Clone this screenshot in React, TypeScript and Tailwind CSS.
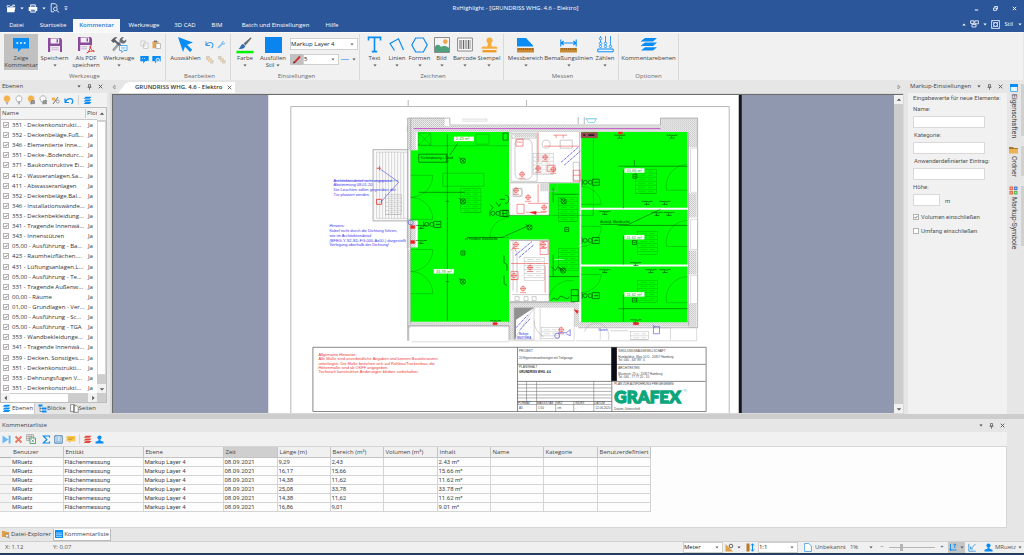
import { Fragment, type ReactNode } from "react";
import clsx from "clsx";

const BLUE = "#0a8cf5";

const LAYERS = [
  "351 - Deckenkonstrukti...",
  "352 - Deckenbeläge.Fuß...",
  "346 - Elementierte Inne...",
  "351 - Decke-,Bodendurc...",
  "371 - Baukonstruktive Ei...",
  "412 - Wasseranlagen.Sa...",
  "411 - Abwasseranlagen",
  "352 - Deckenbeläge.Bal...",
  "346 - Installationswände...",
  "353 - Deckenbekleidung...",
  "341 - Tragende Innenwä...",
  "343 - Innenstützen",
  "05,00 - Ausführung - Ba...",
  "423 - Raumheizflächen....",
  "431 - Lüftungsanlagen.L...",
  "05,00 - Ausführung - Te...",
  "331 - Tragende Außenw...",
  "00,00 - Räume",
  "01,00 - Grundlagen - Ver...",
  "05,00 - Ausführung - Sc...",
  "05,00 - Ausführung - TGA",
  "353 - Wandbekleidunge...",
  "341 - Tragende Innenwä...",
  "359 - Decken, Sonstiges....",
  "351 - Deckenkonstrukti...",
  "353 - Dehnungsfugen V...",
  "351 - Deckenkonstrukti...",
];

const COLUMNS = [
  { label: "Benutzer", width: "w-[52px]" },
  { label: "Entität", width: "w-[80px]" },
  { label: "Ebene", width: "w-[80px]" },
  { label: "Zeit", width: "w-[54px]" },
  { label: "Länge (m)", width: "w-[53px]" },
  { label: "Bereich (m²)", width: "w-[53px]" },
  { label: "Volumen (m³)", width: "w-[54px]" },
  { label: "Inhalt", width: "w-[53px]" },
  { label: "Name", width: "w-[53px]" },
  { label: "Kategorie", width: "w-[54px]" },
  { label: "Benutzerdefiniert", width: "w-[53px]" },
];

const MEASUREMENTS = [
  ["9,29", "2,43", "2.43 m²"],
  ["16,17", "15,66", "15.66 m²"],
  ["14,38", "11,62", "11.62 m²"],
  ["25,08", "33,78", "33.78 m²"],
  ["14,38", "11,62", "11.62 m²"],
  ["16,86", "9,01", "9.01 m²"],
];

/* ---------- small shared pieces ---------- */

function Icon({ w, h, className, children }: { w: number; h: number; className?: string; children: ReactNode }) {
  return (
    <svg width={w} height={h} viewBox={`0 0 ${w} ${h}`} fill="none" aria-hidden className={clsx("shrink-0", className)}>
      {children}
    </svg>
  );
}

function Caret({ className }: { className?: string }) {
  return (
    <Icon w={4} h={3} className={className}>
      <path d="M0.4 0.5h3.2L2 2.4z" fill="currentColor" />
    </Icon>
  );
}

function Arrow({ dir }: { dir: "up" | "down" | "left" | "right" }) {
  const d = {
    up: "M0.8 3.8h4.4L3 1.4z",
    down: "M0.8 2.2h4.4L3 4.6z",
    left: "M3.8 0.8v4.4L1.4 3z",
    right: "M2.2 0.8v4.4L4.6 3z",
  }[dir];
  return (
    <Icon w={6} h={6}>
      <path d={d} fill="#555" />
    </Icon>
  );
}

function TabArrow({ dir }: { dir: "left" | "right" }) {
  return (
    <Icon w={6} h={6}>
      <path d={dir === "left" ? "M4 1v4L1.8 3z" : "M2 1v4l2.200-2z"} stroke="#888" strokeWidth="0.700" />
    </Icon>
  );
}

function Close() {
  return (
    <Icon w={5} h={5}>
      <path d="M0.7 0.7l3.6 3.6M4.3 0.7L0.7 4.3" stroke="#555" strokeWidth="0.9" />
    </Icon>
  );
}

function PanelHeader({ title }: { title: string }) {
  return (
    <header className="flex h-[13px] shrink-0 items-center gap-[6px] bg-[#e6e6e6] pr-[4px] pl-[2px] text-[#444]">
      <h2 className="flex-1 whitespace-nowrap">{title}</h2>
      <button aria-label="Menü"><Caret /></button>
      <button aria-label="Anheften">
        <Icon w={5} h={6}>
          <path d="M1.5 0.5h2v2.6h-2zM0.5 3.3h4M2.5 3.3v2.5" stroke="#555" strokeWidth="0.7" />
        </Icon>
      </button>
      <button aria-label="Schließen"><Close /></button>
    </header>
  );
}

function Check({ id, checked }: { id: string; checked?: boolean }) {
  return (
    <span className="grid size-[6px] shrink-0">
      <input id={id} type="checkbox" defaultChecked={checked} className="peer col-start-1 row-start-1 size-[6px] appearance-none border border-[#b4b4b4] bg-white" />
      <svg viewBox="0 0 6 6" className="pointer-events-none col-start-1 row-start-1 hidden size-[6px] peer-checked:block">
        <path d="M1.5 3l1.1 1.2L4.6 1.8" stroke="#444" strokeWidth="0.7" fill="none" />
      </svg>
    </span>
  );
}

function Combo({ label, value, className }: { label: string; value: string; className: string }) {
  return (
    <span className={clsx("flex items-center border border-[#d0d0d0] bg-white pr-[3px] text-[#222]", className)}>
      <select aria-label={label} className="min-w-0 flex-1 appearance-none bg-transparent">
        <option>{value}</option>
      </select>
      <Caret className="text-[#666]" />
    </span>
  );
}

/* ---------- title bar ---------- */

function TitleBar() {
  return (
    <div className="flex h-[16px] items-center text-white">
      <div className="flex flex-1 items-center gap-[4px] pl-[6px]">
        <button aria-label="Öffnen">
          <Icon w={10} h={9}>
            <path d="M1 3.2h8.4l-1 5H1z" fill="#fff" />
            <path d="M1 3V1.7h2.6l.8.7h2V3M6 1.4h2.4M7.6.4l1.2 1-1.2 1" stroke="#fff" strokeWidth="0.8" />
          </Icon>
        </button>
        <Caret />
        <button aria-label="Drucken">
          <Icon w={10} h={9}>
            <path d="M0.7 3h8.6v4H0.7z" fill="#fff" />
            <path d="M2.6 3V.8h4.8V3M2.6 5.2h4.8v3H2.6z" fill="#5b7fb6" stroke="#fff" strokeWidth="0.8" />
          </Icon>
        </button>
        <Caret />
        <button aria-label="Vorschau">
          <Icon w={10} h={10}>
            <path d="M4 8.8H1.2V.7h4L7 2.4v1.8" stroke="#fff" strokeWidth="0.8" />
            <circle cx="5.4" cy="6" r="1.8" stroke="#fff" strokeWidth="0.8" />
            <path d="M6.8 7.4l2 2" stroke="#fff" strokeWidth="1" />
          </Icon>
        </button>
        <button aria-label="Symbolleiste anpassen">
          <Icon w={4} h={5}>
            <path d="M0.4 .8h3.2" stroke="#fff" strokeWidth="0.8" />
            <path d="M0.4 2.4h3.2L2 4.2z" fill="#fff" />
          </Icon>
        </button>
      </div>
      <h1 className="pl-[8px]">RxHighlight - [GRUNDRISS WHG. 4.6 - Elektro]</h1>
      <div className="flex flex-1 items-center justify-end gap-[14px] pr-[7px]">
        <button aria-label="Minimieren">
          <Icon w={5} h={5}><path d="M0.8 4h3.4" stroke="#fff" /></Icon>
        </button>
        <button aria-label="Verkleinern">
          <Icon w={5} h={5}>
            <path d="M0.5 2h3v2.4h-3zM1.6 1.7V.5h3v2.6H3.8" stroke="#fff" strokeWidth="0.8" />
          </Icon>
        </button>
        <button aria-label="Beenden">
          <Icon w={5} h={5}><path d="M0.8 0.8l3.4 3.4M4.2 0.8L0.8 4.2" stroke="#fff" /></Icon>
        </button>
      </div>
    </div>
  );
}

const TABS = [
  { label: "Datei", width: "w-[33px]" },
  { label: "Startseite", width: "w-[40px]" },
  { label: "Kommentar", width: "w-[47px]", active: true },
  { label: "Werkzeuge", width: "w-[48px]" },
  { label: "3D CAD", width: "w-[34px]" },
  { label: "BIM", width: "w-[30px]" },
  { label: "Batch und Einstellungen", width: "w-[87px]" },
  { label: "Hilfe", width: "w-[26px]" },
];

function RibbonTabs() {
  return (
    <nav className="flex h-[16px] items-end text-white">
      {TABS.map((t) => (
        <button
          key={t.label}
          className={clsx("h-[13px] whitespace-nowrap", t.width, t.active && "bg-[#f8f8f8] font-semibold text-[#2b7fd8]")}
        >
          {t.label}
        </button>
      ))}
      <div className="flex h-[16px] flex-1 items-center justify-end gap-[4px] pr-[2px]">
        <Icon w={4} h={3}><path d="M0.3 2.5h3.4L2 .5z" fill="#fff" /></Icon>
        <button aria-label="Fenster anordnen">
          <Icon w={9} h={8}>
            <path d="M.6.8h3.400v2.600h-3.400zM4.800.8h3.600v3H4.800zM2 4.400h4v2.600H2z" stroke="#fff" strokeWidth="0.8" />
          </Icon>
        </button>
        <Caret />
        <button aria-label="Vollbild">
          <Icon w={9} h={9}>
            <path d="M.5.5h8v8h-8z" stroke="#fff" strokeWidth="0.7" />
            <circle cx="4.5" cy="4.5" r="2" stroke="#fff" strokeWidth="1" />
            <path d="M1.500 1.500l1.600 1.600M7.500 1.500L5.900 3.100M1.500 7.500l1.600-1.600M7.500 7.500L5.900 5.900" stroke="#fff" strokeWidth="0.7" />
          </Icon>
        </button>
        <button className="flex items-center gap-[5px] pl-[1px]">
          Stil <Caret />
        </button>
      </div>
    </nav>
  );
}

/* ---------- ribbon ---------- */

const FloppyShape = (
  <>
    <path d="M1 1h12.6L15 2.4V15H1z" fill="#8a4b9c" />
    <path d="M3.6 1.6h8.6v4.8H3.6zM3.2 9h9.8v6H3.2z" fill="#f4f0f6" />
    <path d="M9.6 2.2h1.4v3.4H9.6z" fill="#8a4b9c" />
    <path d="M4.4 10.8h7.4M4.4 12.8h7.4" stroke="#b59abf" strokeWidth="0.7" />
  </>
);

const RIBBON_ICONS = {
  comment: (
    <Icon w={18} h={16}>
      <path d="M1 1h16v10.5H9.5L6 15v-3.5H1z" fill={BLUE} />
      <path d="M4.4 6h1.8M8.1 6h1.8M11.8 6h1.8" stroke="#fff" strokeWidth="1.3" />
    </Icon>
  ),
  floppy: <Icon w={16} h={16}>{FloppyShape}</Icon>,
  floppyPdf: (
    <Icon w={18} h={18}>
      {FloppyShape}
      <path d="M10 9.500h7v8h-7z" fill="#f1f1f1" />
      <path d="M9.8 17c1.6-.6 3.6-4 3.4-7 .4 3.400 1.600 4.600 4.200 5.200-2.600-.5-5.400.1-7.600 1.800z" stroke="#e03a34" />
    </Icon>
  ),
  tools: (
    <Icon w={18} h={17}>
      <path d="M3 14.600l7-8.200" stroke="#9aa0a6" strokeWidth="2.400" />
      <path d="M5 5l7 6" stroke="#5c6066" strokeWidth="2.200" />
      <path d="M1 4.400L4.600 1.200h3L5 3.400l1.200 1.400L3.400 7z" fill="#5c6066" />
      <path d="M13.800 1l-1.600 2.300 1.700 1.700 2.400-1.400c.4 2.400-1.400 4.400-3.800 3.800L9.600 6.200C9 3.200 11 .6 13.800 1z" fill="#6b7077" />
      <path d="M9.500 9.500h7.500v5h-3.200l-2 2v-2H9.500z" fill="#fff" stroke="#4aa3ee" strokeWidth="0.900" />
      <path d="M11 11.300h4.600M11 12.900h4.600" stroke="#4aa3ee" strokeWidth="0.600" />
    </Icon>
  ),
  cursor: (
    <Icon w={17} h={17}>
      <path d="M1 1l15 5.600-6 2.200 5.200 5-2.200 2.200L8 10.800 6 16z" fill={BLUE} />
    </Icon>
  ),
  brush: (
    <Icon w={18} h={18}>
      <path d="M14.800 1.200L7.600 7.600l1.900 1.900 6.100-7.300z" fill="#6a6f75" />
      <path d="M7 8c-2.200.4-2.200 3.200-4.400 4.800 3 .7 6.400-.4 6.600-2.800z" fill="#2f6cb0" />
      <path d="M.5 14.800h17v2.500H.5z" fill="#00f000" />
    </Icon>
  ),
  fill: <Icon w={17} h={16}><path d="M0 0h17v16H0z" fill="#0a84ee" /></Icon>,
  text: (
    <Icon w={15} h={17}>
      <path d="M1.500 4.500V1.400h12v3.100M7.500 1.400v14.200M4.800 15.600h5.400" stroke={BLUE} strokeWidth="1.600" />
    </Icon>
  ),
  lines: (
    <Icon w={16} h={16}>
      <path d="M5.500 13.500L1 6.500l8.500-4.700 5 11.200" stroke={BLUE} strokeWidth="1.200" />
    </Icon>
  ),
  hexagon: (
    <Icon w={17} h={16}>
      <path d="M4.700 1h7.600l3.900 7-3.900 7H4.700L.8 8z" stroke={BLUE} strokeWidth="1.200" />
    </Icon>
  ),
  image: (
    <Icon w={16} h={16}>
      <path d="M.5.500h15v15H.500z" fill="#f4f4f4" stroke="#8b8b8b" />
      <circle cx="11.300" cy="4.600" r="2.300" fill="#eba94a" />
      <path d="M1 9.500c2-2.500 4.500-2 6 .5 2-1.500 5-1.500 8 .8V15H1z" fill="#4fa07c" />
    </Icon>
  ),
  barcode: (
    <Icon w={16} h={15}>
      <path d="M.6 1h14.800v13H.600z" fill="#fafafa" stroke="#8b8b8b" />
      <path d="M3 3v9M6.500 3v9M11.500 3v9" stroke="#555" strokeWidth="0.900" />
      <path d="M4.700 3v9M8.200 3v9M9.800 3v9M13 3v9" stroke="#888" strokeWidth="0.900" />
    </Icon>
  ),
  stamp: (
    <Icon w={17} h={16}>
      <circle cx="8.500" cy="3.500" r="3" fill="#f7ad3c" />
      <path d="M7 5.500h3l.6 4h3.900c1.300 0 2 .8 2 2.300H.5c0-1.500.7-2.300 2-2.300h3.900z" fill="#f7ad3c" />
      <path d="M1.500 13h14v2.400h-14z" fill="#f09a2a" />
    </Icon>
  ),
  area: (
    <Icon w={17} h={16}>
      <path d="M0 1h9l7 7.500v1H0z" fill={BLUE} />
      <path d="M0 11h17v4.500H0z" fill="#c98a35" />
      <path d="M2 11v2M4.200 11v2M6.400 11v2M8.600 11v2M10.800 11v2M13 11v2M15.200 11v2" stroke="#7a4b10" strokeWidth="0.700" />
    </Icon>
  ),
  dimension: (
    <Icon w={17} h={16}>
      <path d="M.8 2.500v7M16.200 2.500v7M1 6h15M3.600 4L1.400 6l2.200 2M13.400 4l2.200 2-2.200 2" stroke={BLUE} strokeWidth="1.100" />
      <path d="M0 11h17v4.500H0z" fill="#c98a35" />
      <path d="M2 11v2M4.200 11v2M6.400 11v2M8.600 11v2M10.800 11v2M13 11v2M15.200 11v2" stroke="#7a4b10" strokeWidth="0.700" />
    </Icon>
  ),
  abacus: (
    <Icon w={17} h={17}>
      <path d="M3.500 0v12M8.500 0v12M13.500 0v12" stroke={BLUE} strokeWidth="0.800" />
      <path d="M.8 13h15.400v2.800H.800z" fill="#e6f3ff" stroke={BLUE} />
      <g fill="#fff" stroke={BLUE} strokeWidth="0.800">
        <circle cx="3.500" cy="2.600" r="1.200" /><circle cx="3.500" cy="7.400" r="1.200" /><circle cx="3.500" cy="10.400" r="1.200" />
        <circle cx="8.500" cy="7.400" r="1.200" /><circle cx="8.500" cy="10.400" r="1.200" /><circle cx="13.500" cy="10.400" r="1.200" />
      </g>
    </Icon>
  ),
  layers: (
    <Icon w={17} h={15}>
      <path d="M5 1h12l-4 3.400H1zM5 5.600h12l-4 3.400H1zM5 10.200h12l-4 3.400H1z" fill={BLUE} />
      <path d="M1 4.600l3-2.500M1 9.200l3-2.500" stroke={BLUE} strokeWidth="0.800" />
    </Icon>
  ),
};

type BigButtonProps = {
  icon: ReactNode;
  label: string;
  second?: string;
  width: string;
  caret?: boolean;
  pressed?: boolean;
};

function BigButton({ icon, label, second, width, caret, pressed }: BigButtonProps) {
  return (
    <button className={clsx("flex h-[36px] shrink-0 flex-col items-center whitespace-nowrap", width, pressed && "bg-[#c1c1c1]")}>
      <span className="grid h-[21px] place-items-center">{icon}</span>
      <span className="h-[7px] leading-[7px]">{label}</span>
      <span className="flex h-[7px] items-center gap-[2px] leading-[7px]">
        {second}
        {caret && <Caret className="text-[#555]" />}
      </span>
    </button>
  );
}

function RibbonGroup({ title, width, children }: { title: string; width: string; children: ReactNode }) {
  return (
    <section className={clsx("flex shrink-0 flex-col border-r border-[#dadada]", width)}>
      <div className="flex h-[38px] items-start">{children}</div>
      <p className="text-center leading-[8px] text-[#6a6a6a]">{title}</p>
    </section>
  );
}

function Ribbon() {
  const I = RIBBON_ICONS;
  return (
    <div className="mr-px flex h-[48px] shrink-0 border-t border-[#fafafa] bg-[#f1f1f1] pt-px text-[#444]">
      <RibbonGroup title="Werkzeuge" width="w-[166px] pl-[4px]">
        <BigButton icon={I.comment} label="Zeige" second="Kommentar" width="w-[34px]" pressed />
        <BigButton icon={I.floppy} label="Speichern" width="w-[33px]" caret />
        <BigButton icon={I.floppyPdf} label="Als PDF" second="speichern" width="w-[30px]" />
        <BigButton icon={I.tools} label="Werkzeuge" width="w-[36px]" caret />
        <div className="grid grid-cols-2 gap-x-[3px] gap-y-[6px] pt-[6px] pl-[3px]">
          <button aria-label="Kopieren">
            <Icon w={9} h={9}><path d="M1 1h4v5H1zM3.500 3h4.500v5.500H3.500z" fill="#f8f8f8" stroke="#c4c4c4" strokeWidth="0.800" /></Icon>
          </button>
          <button aria-label="Einfügen">
            <Icon w={9} h={9}>
              <path d="M.5 1.200h6v7h-6z" fill="#e2a553" />
              <path d="M2 .5h3v1.500H2z" fill="#777" />
              <path d="M4 3.500h4.500v5H4z" fill="#fff" stroke="#999" strokeWidth="0.600" />
            </Icon>
          </button>
          <button aria-label="Kommentar exportieren">
            <Icon w={9} h={9}>
              <path d="M.3 1h8.400v5.300H5L3.200 8.400V6.300H.300z" fill={BLUE} />
              <path d="M2 3.500h1M4 3.500h1M5 7h3M7 5.600L8.500 7 7 8.400" stroke="#fff" strokeWidth="0.700" />
            </Icon>
          </button>
          <button aria-label="Kommentar suchen">
            <Icon w={9} h={9}>
              <path d="M.3 1h8.400v5.300H5L3.200 8.400V6.300H.300z" fill={BLUE} />
              <circle cx="5.800" cy="5" r="1.800" fill="#4aa8f5" stroke="#fff" strokeWidth="0.700" />
            </Icon>
          </button>
        </div>
      </RibbonGroup>
      <RibbonGroup title="Bearbeiten" width="w-[65px] pl-[3px]">
        <BigButton icon={I.cursor} label="Auswählen" width="w-[33px]" />
        <div className="grid grid-cols-2 gap-x-[3px] gap-y-[6px] pt-[6px] pl-[3px]">
          <button aria-label="Rückgängig">
            <Icon w={9} h={9}><path d="M1 1.500v4h4M1.300 5.200C3 1.600 7.400 1.600 8 5c.1 1.200-.5 2.200-1.500 3" stroke="#3d9be9" strokeWidth="1.100" /></Icon>
          </button>
          <button aria-label="Eigenschaften">
            <Icon w={9} h={9}>
              <path d="M1 8l4-4" stroke="#7dbcf0" strokeWidth="1.600" />
              <path d="M7.300 1L5.800 2.500l.7 1L8.300 2.600C8.500 4.500 6 5.500 4.700 4 3.800 2.500 5 .500 7.300 1z" fill="#7dbcf0" />
            </Icon>
          </button>
          <button aria-label="Nach vorne">
            <Icon w={9} h={9}><path d="M1 1h4v4H1zM5 5h3.500v3.500H5z" fill="#d5cdc1" /><path d="M3 3h4v4H3z" fill="#e9d3b0" /></Icon>
          </button>
          <button aria-label="Nach hinten">
            <Icon w={9} h={9}><path d="M3 3h4v4H3z" fill="#e9d3b0" /><path d="M1 1h3.500v3.500H1zM5 5h3.500v3.500H5z" fill="#d5cdc1" /></Icon>
          </button>
        </div>
      </RibbonGroup>
      <RibbonGroup title="Einstellungen" width="w-[129px] pl-[3px]">
        <BigButton icon={I.brush} label="Farbe" width="w-[22px]" caret />
        <BigButton icon={I.fill} label="Ausfüllen" second="Stil" width="w-[34px]" caret />
        <div className="flex flex-col gap-[4px] pt-[4px]">
          <Combo label="Ebene" value="Markup Layer 4" className="h-[12px] w-[68px]" />
          <div className="flex h-[11px] items-center">
            <button aria-label="Stift" className="grid h-[11px] w-[13px] place-items-center bg-[#c1c1c1]">
              <Icon w={10} h={9}><path d="M2 7.800l6-6.300" stroke="#d03030" strokeWidth="1.900" /><path d="M1 8.500l.8-2L3 7.700z" fill="#222" /></Icon>
            </button>
            <Combo label="Linienstärke" value="5" className="h-[11px] w-[36px]" />
            <button aria-label="Linientyp" className="flex items-center gap-[3px] pl-[2px] text-[#555]">
              <Icon w={8} h={3}><path d="M0 1.500h8" stroke="#6db4f2" /></Icon>
              <Caret />
            </button>
          </div>
        </div>
      </RibbonGroup>
      <RibbonGroup title="Zeichnen" width="w-[144px] pl-[3px]">
        <BigButton icon={I.text} label="Text" width="w-[23px]" caret />
        <BigButton icon={I.lines} label="Linien" width="w-[22px]" caret />
        <BigButton icon={I.hexagon} label="Formen" width="w-[23px]" caret />
        <BigButton icon={I.image} label="Bild" width="w-[21px]" caret />
        <BigButton icon={I.barcode} label="Barcode" width="w-[25px]" caret />
        <BigButton icon={I.stamp} label="Stempel" width="w-[24px]" caret />
      </RibbonGroup>
      <RibbonGroup title="Messen" width="w-[115px] pl-[3px]">
        <BigButton icon={I.area} label="Messbereich" width="w-[37px]" caret />
        <BigButton icon={I.dimension} label="Bemaßungslinien" width="w-[49px]" caret />
        <BigButton icon={I.abacus} label="Zählen" width="w-[24px]" caret />
      </RibbonGroup>
      <RibbonGroup title="Optionen" width="w-[60px]">
        <BigButton icon={I.layers} label="Kommentarebenen" width="w-[59px]" />
      </RibbonGroup>
    </div>
  );
}

/* ---------- layer panel ---------- */

function Bulb({ fill, extra }: { fill: string; extra?: ReactNode }) {
  return (
    <Icon w={8} h={10}>
      <path d="M4 .8c-1.800 0-3 1.200-3 2.800 0 1.300.8 1.800 1.300 3h3.400C6.200 5.400 7 4.900 7 3.600 7 2 5.800.800 4 .8z" fill={fill} stroke={fill === "#fff" ? "#888" : fill} strokeWidth="0.600" />
      <path d="M2.800 7.600h2.400M3 8.800h2" stroke="#888" strokeWidth="0.700" />
      {extra}
    </Icon>
  );
}

const LayersSmall = ({ color }: { color: string }) => (
  <Icon w={9} h={9}>
    <path d="M2.600.800H8.600L6.600 2.800H.600zM2.600 3.400H8.600L6.600 5.400H.600zM2.600 6H8.600L6.600 8H.600z" fill={color} />
  </Icon>
);

const Undo = (
  <Icon w={10} h={9}>
    <path d="M1 2.500v4h4M1.300 6.200C3 2 8 1.600 8.800 4.600 9 6 8.400 7 7.400 7.800" stroke={BLUE} strokeWidth="1.200" />
  </Icon>
);

const Lock = <path d="M4.500 5.500h3v3.200h-3z" fill="#999" stroke="#666" strokeWidth="0.500" />;

function LayerPanel() {
  return (
    <aside className="flex w-[107px] shrink-0 flex-col">
      <PanelHeader title="Ebenen" />
      <div className="flex h-[14px] shrink-0 items-center gap-[4px] bg-[#f1f1f1] pl-[3px]">
        <button aria-label="Ebenen ein"><Bulb fill="#f3b24c" /></button>
        <button aria-label="Ebenen aus"><Bulb fill="#fff" /></button>
        <button aria-label="Auswahl ein"><Bulb fill="#f3b24c" extra={Lock} /></button>
        <button aria-label="Auswahl aus"><Bulb fill="#fff" extra={Lock} /></button>
        <button aria-label="Umkehren">
          <Icon w={9} h={9}>
            <circle cx="2.500" cy="3" r="1.800" fill="#f3b24c" />
            <path d="M2 8L7 1" stroke="#555" strokeWidth="0.800" />
            <circle cx="6.800" cy="5.500" r="1.500" fill="#fff" stroke="#777" strokeWidth="0.700" />
          </Icon>
        </button>
        <button aria-label="Rückgängig">{Undo}</button>
        <span className="h-[10px] border-l border-[#d4d4d4]" />
        <button aria-label="Ebenen"><LayersSmall color={BLUE} /></button>
      </div>
      <div className="flex min-h-0 flex-1 flex-col border border-[#bdbdbd] bg-white">
        <div className="flex min-h-0 flex-1">
          <div className="flex flex-1 flex-col">
            <div className="flex h-[12px] shrink-0 items-center border-b border-[#c8c8c8] bg-[#f3f3f3] text-[#444]">
              <span className="w-[85px] border-r border-[#ccc] pl-px">Name</span>
              <span className="w-[11px] overflow-hidden pl-px">Plot</span>
            </div>
            <ul className="flex min-h-0 flex-1 flex-col justify-between py-px">
              {LAYERS.map((layer, i) => (
                <li key={i} className="flex items-center leading-[8px] text-[#333]">
                  <label className="flex w-[87px] items-center gap-[3px] overflow-hidden pl-[2px] whitespace-nowrap">
                    <Check id={`layer-${i}`} checked />
                    {layer}
                  </label>
                  <span>Ja</span>
                </li>
              ))}
            </ul>
          </div>
          <div className="flex w-[9px] flex-col items-center bg-[#cdcdcd]">
            <button aria-label="Nach oben" className="grid h-[12px] w-full place-items-center bg-[#f1f1f1]"><Arrow dir="up" /></button>
            <span className="mt-px w-full flex-1 border border-[#d4d4d4] bg-white" />
            <button aria-label="Nach unten" className="mt-[9px] grid h-[9px] w-full place-items-center bg-[#f1f1f1]"><Arrow dir="down" /></button>
          </div>
        </div>
        <div className="flex h-[9px] shrink-0 items-center bg-[#cdcdcd] pr-[9px]">
          <button aria-label="Nach links" className="grid h-[9px] w-[9px] place-items-center bg-[#f1f1f1]"><Arrow dir="left" /></button>
          <span className="h-[8px] w-[58px] bg-white" />
          <span className="flex-1" />
          <button aria-label="Nach rechts" className="grid h-[9px] w-[9px] place-items-center bg-[#f1f1f1]"><Arrow dir="right" /></button>
        </div>
      </div>
      <div className="flex h-[11px] shrink-0 items-center text-[#444]">
        <button className="flex h-full items-center gap-px border-r border-[#ccc] bg-white pr-px pl-[2px]">
          <LayersSmall color={BLUE} /> Ebenen
        </button>
        <button className="flex items-center pl-[3px]">
          <Icon w={9} h={9}>
            <path d="M2 2v5.500h2M2 4.500h2" stroke="#555" strokeWidth="0.600" />
            <path d="M.5.500h4v2h-4zM4 3.400h4.500v2H4zM4 6.500h4.500v2H4z" fill={BLUE} />
          </Icon>
          Blöcke
        </button>
        <button className="flex items-center pl-[4px]">
          <Icon w={9} h={9}>
            <path d="M.6.6h4v7h-4zM3.500 1.600h3l1.700 1.800v5H3.500z" fill="#fff" stroke="#666" strokeWidth="0.700" />
          </Icon>
          Seiten
        </button>
      </div>
    </aside>
  );
}

/* ---------- floor plan ---------- */

const LAMPS = [
  [463, 160.500], [463, 201], [463, 281], [563.500, 201], [529.500, 227], [563, 270],
];
const TAGS = [
  [463, 252.500], [634.500, 176], [566.500, 229], [634, 242], [634, 299.500],
];
const OUTLETS = [
  [619, 136], [671, 136], [604, 212], [656, 213], [668, 213], [604, 270], [650, 270], [664, 270], [421, 226], [421, 241], [635, 263], [635, 320], [495, 321], [646, 202], [664, 202],
];
const DOORS = [
  "M411 175h22M433 175a22 22 0 0 1-22 22",
  "M411 219h22M433 219a22 22 0 0 0-22-22",
  "M411 249h22M433 249a22 22 0 0 1-22 22",
  "M411 293h22M433 293a22 22 0 0 0-22-22",
  "M509 237h-19M490 237a20 20 0 0 1 19-20",
  "M581 204h20M601 204a20 20 0 0 0-20-18",
  "M581 226v0h20M581 246a20 20 0 0 0 20-20",
  "M581 274h20M581 292a20 20 0 0 0 20-18",
  "M687 164a22 22 0 0 0-21 26h21",
  "M687 220a22 22 0 0 0-21 26h21",
  "M687 276a22 22 0 0 0-21 26h21",
  "M549 296a22 22 0 0 1 24-16",
];
const GRIDS = [
  [461, 188, 20, 24], [558, 197, 19, 24], [635, 169, 21, 24], [637, 231, 20, 23], [637, 280, 20, 22], [558, 248, 20, 22],
];
const WET_GRIDS = [[533, 153, 20, 21], [524, 257, 20, 23], [541, 327, 18, 11], [630, 331, 18, 8], [386, 194, 16, 20]];
const RED_MARKS = [
  [545, 157], [553, 169], [538, 168], [522, 174], [528, 197], [516, 190], [544, 207], [530, 267], [523, 288], [514, 275], [516, 244], [543, 244], [561, 329],
];
const AREA_LABELS = [
  { x: 454, y: 136.500, text: "2,43 m²" },
  { x: 434, y: 268.500, text: "33,78 m²" },
  { x: 624, y: 168, text: "15,66 m²" },
  { x: 624, y: 234.500, text: "11,62 m²" },
  { x: 624, y: 291.500, text: "11,62 m²" },
];

function Grid({ x, y, w, h, color }: { x: number; y: number; w: number; h: number; color: string }) {
  const rows = Math.floor(h / 4);
  return (
    <g stroke={color} strokeWidth="0.350">
      <rect x={x} y={y} width={w} height={h} />
      {Array.from({ length: rows }, (_, i) => (
        <Fragment key={i}>
          <path d={`M${x} ${y + 4 * (i + 1)}h${w}`} />
          <path d={`M${x + 3} ${y + 4 * i + 2}h${w / 3}M${x + w / 2 + 2} ${y + 4 * i + 2}h${w / 4}`} />
        </Fragment>
      ))}
    </g>
  );
}

function FloorPlan() {
  return (
    <svg viewBox="113 95 781 317" preserveAspectRatio="xMidYMin slice" className="size-full" fill="none" fontFamily="Liberation Sans, sans-serif">
      <defs>
        <pattern id="hatch" width="2" height="2" patternUnits="userSpaceOnUse">
          <rect width="2" height="2" fill="#ededed" />
          <path d="M0 2L2 0" stroke="#a5a5a5" strokeWidth="0.500" />
        </pattern>
      </defs>
      <rect x="271" y="90" width="470" height="340" fill="#15171c" />
      <rect x="269" y="90" width="469" height="340" fill="#fff" />
      <path d="M291.500 420V106.500H728.500V420M408.500 100v6M526.500 100v6" stroke="#9a9a9a" strokeWidth="0.700" />

      {/* outer and inner walls */}
      <path d="M407 118h96v-1h15v7h60v-7h6v7h71v-6h42v10l-3 195h3v4H509v14h-97v-14h1V156h-7z" fill="#fff" />
      <path d="M407 126h290v6H407zM408 118h37v8h-37zM660 118h37v8h-37zM408 126h8v24h-8zM688 126h9v21h-9zM688 193h8v24h-8zM688 250h8v24h-8zM688 303h8v24h-8zM411 321h99v5h-99zM575 321h120v5H575zM408 249h3v78h-3zM509 302h66v5h-66zM509 305h5v34h-5zM407 218h9v30h-9zM574 302h5v24h-5z" fill="url(#hatch)" />
      <path d="M408 118h42v7h210v-7h37v209h-119M578 117v7M584 117v7M408 118v222M411 118v205M688 132v193M508.500 132v190M549 183v58M579.500 132v170M510 182.500h70M510 215h39M510 240h39v61h-39M509 302h66M409 340V325h100v15" stroke="#9b9b9b" strokeWidth="0.700" />
      <path d="M690 148h7v44h-7zM690 219h7v30h-7zM690 275h7v28h-7zM412 341h97M510 340h64v-33M576 340h120v-13M584 119h13M462 119h25v2h-25M600 327v12M655 327h15v12" stroke="#bbb" strokeWidth="0.500" />
      <path d="M414 128.500h246" stroke="#c04bc4" strokeWidth="0.900" />
      <path d="M586 118.500h10l-2 4h-6z" stroke="#3cc6e8" strokeWidth="0.600" />

      {/* balcony */}
      <path d="M373.500 149.500H408v71h-34.500z" stroke="#8c8c8c" strokeWidth="0.700" fill="#fafafa" />
      <path d="M377 152h31v66h-31zM380 152v66M383 152v66M386 152v66M389 152v66M392 152v66M395 152v66M398 152v66M401 152v66M404 152v66" stroke="#b5b5b5" strokeWidth="0.500" />
      <path d="M381 169l18 13-18 20" stroke="#4a4ae0" strokeWidth="0.600" />
      <path d="M334 180.500h65" stroke="#4a4ae0" strokeWidth="0.400" />
      <path d="M377 168h4M380 166v4M377 199h5v5h-5z" stroke="#f02828" strokeWidth="0.800" />
      <circle cx="411" cy="222" r="2.500" stroke="#4a4ae0" strokeWidth="0.600" />

      {/* measured areas */}
      <g fill="#00ff00">
        <path d="M418 132h91v83h40v-32h30v118h-30v-62h-40v82h-98v-74h7v-27h-7v-70h7z" />
        <path d="M581 132h106v75.500H581z" />
        <path d="M581 209.500h106V264H581z" />
        <path d="M581 266h106v55.500H581z" />
      </g>

      <g stroke="#008a00" strokeWidth="0.400">
        {DOORS.map((d) => <path key={d} d={d} />)}
        <path d="M419 133h12v12h-12zM419 133l12 12M431 133l-12 12M418 145.500h91M476 134h13v10h-13zM443 173h41v13h-41zM593 132v83h-84M593 209v6" />
      </g>
      {GRIDS.map(([x, y, w, h], i) => <Grid key={i} x={x} y={y} w={w} h={h} color="#009a00" />)}
      {WET_GRIDS.map(([x, y, w, h], i) => <Grid key={i} x={x} y={y} w={w} h={h} color="#999" />)}

      {/* electrical symbols */}
      <g stroke="#043804" strokeWidth="0.600">
        <path d="M447.500 134v186M419 192h46M618 166h69M634 160v6M623 170v38M618 225h69M623 236v28M618 308h69M623 294v27M553 187v15M554 194h25M553 254v22M549 276h30" strokeWidth="0.500" />
        <path d="M446 161h3M446 201h3M446 281h3M450 155l8-12M600 224h28l32-15M467 237h35l27-12" strokeWidth="0.500" />
        <path d="M419 154h28v8h-28zM503 133h5v7h-5z" />
        {LAMPS.map(([x, y]) => (
          <g key={`${x}-${y}`}>
            <circle cx={x} cy={y} r="2.600" />
            <path d={`M${x - 2} ${y - 2}l4 4M${x + 2} ${y - 2}l-4 4M${x - 4} ${y - 3}l2 1`} />
          </g>
        ))}
        {TAGS.map(([x, y]) => <path key={`${x}-${y}`} d={`M${x - 2} ${y - 2}h4v4h-4zM${x - 1} ${y}h2`} />)}
        {OUTLETS.map(([x, y]) => (
          <path key={`${x}-${y}`} d={`M${x - 5} ${y - 1}h2a3 2 0 0 0 3 0a3 2 0 0 0 4 0h2M${x} ${y}v2M${x - 2} ${y + 2}h5`} />
        ))}
        {[[585, 182], [585, 240], [585, 295], [493, 213], [427, 224]].map(([x, y]) => (
          <g key={`${x}-${y}`}>
            <circle cx={x} cy={y} r="2" />
            <circle cx={x + 5} cy={y} r="2" />
            <path d={`M${x + 7} ${y - 3}h7v6h-7zM${x - 3} ${y - 3}v6M${x + 9} ${y}h4`} />
          </g>
        ))}
        <path d="M490 204l3 3-2 3M496 202l3 4 2-3M505 195a4 4 0 1 1 0 8M500 199h5M504 255v7l3 2v6M504 275v8l3 2M551 266l4 4 3-4 3 4 3-3M551 300c3-6 6 2 8-3s8 5 10-1M571 289h7v12h-7zM571 295h7M503 210h6v6h-6z" />
      </g>
      <g fill="#062e06" fontSize="3">
        <text x="421" y="159">Küchenplanung s. Detail</text>
        <text x="465" y="240">zu Pendlern Wohnküche</text>
        <text x="600" y="223">Ansteigl. Wandleuchte</text>
      </g>

      {/* bathrooms */}
      <g stroke="#aaa" strokeWidth="0.600">
        <rect x="515" y="139" width="17" height="40" rx="5" />
        <path d="M511 133h26v48h-26zM512 134h24v4h-24zM560 140h12v8h-12zM513 188h9v8h-9zM573 162h6v18h-6zM512 294h36M515 296h4v4h-4zM524 296h4v4h-4zM532 296h4v4h-4zM517 250v42M513 240v50M549 183h8v8h-8z" />
        <circle cx="546" cy="144" r="4" />
        <circle cx="518" cy="192" r="4" />
      </g>
      <path d="M540 183h9v8h-9zM514 134h22v3h-22z" fill="url(#hatch)" />
      <g stroke="#e8302c" strokeWidth="0.500">
        {RED_MARKS.map(([x, y]) => (
          <g key={`${x}-${y}`}>
            <circle cx={x} cy={y} r="2.200" />
            <path d={`M${x - 3} ${y}h6M${x} ${y - 3}v6M${x - 3} ${y + 4}h6`} />
          </g>
        ))}
        <path d="M544 146h35M538 132v30M553 135h14M556 138v-3M563 138v-3M538 184v18M528 203h20M511 263h37M545 265v27M516 139h7v7h-7zM517 142h5M547 165h8v6h-8zM573 170h7v11h-7zM573 175h7M517 204h7v9h-7zM540 241h8v13h-8zM541 247h6M511 271h7v8h-7zM511 250l3-4 2 5M526 212h20" />
        <path d="M530 212l6-1v3zM411 225h4v3h-4zM411 240h4v3h-4zM618 132h4v2h-4zM574 309l4 1-1 3zM633 322h5v2h-5zM493 322h4v2h-4z" fill="#f02020" />
      </g>
      <path d="M581 132.500h16v5h-16z" fill="#9c4a5a" stroke="#b02a40" strokeWidth="0.500" />
      <path d="M583 135h2M588 135h6" stroke="#222" strokeWidth="1.600" />
      <g stroke="#4a4ae0" strokeWidth="0.800">
        <path d="M561 162l17-15M564 165l16-14M515 255l17-14M519 257l15-13M516 327l12-13M520 329l10-11" strokeDasharray="3 1" />
        <path d="M558 332h8l4-3v6l-4-2M653 326h6v7h-6zM652 324l3 3" strokeWidth="0.600" />
        <circle cx="557" cy="335" r="2.500" strokeWidth="0.600" />
      </g>
      <path d="M514 307h20l-18 12v19h-2z" fill="#909090" />
      <path d="M514 307h20v32h-20zM514 339l20-32M540 307v32M534 320a18 18 0 0 0 10 16M584 331a12 12 0 0 1 24 8M610 330h18" stroke="#aaa" strokeWidth="0.500" />
      <g fill="#3030dc" fontSize="3">
        <text x="519" y="334">Belege</text>
        <text x="517" y="338">BMZ/WRA</text>
        <text x="598" y="330">Garten</text>
      </g>

      {AREA_LABELS.map((a, i) => (
        <g key={i}>
          <rect x={a.x} y={a.y} width="20" height="4.500" fill="#fff" />
          <text x={a.x + 2} y={a.y + 3.800} fontSize="4" fill="#1fae1f">{a.text}</text>
        </g>
      ))}
      <path d="M554 259h10" stroke="#d8ffd8" strokeWidth="0.600" />

      {/* notes */}
      <g fill="#3a3af0" fontSize="4">
        <text x="334" y="181.500">Architektendetail nicht angepasst</text>
        <text x="334" y="186">Abstimmung 08.01.20</text>
        <text x="334" y="191">Die Leuchten sollen gegenüber der</text>
        <text x="334" y="196">Tür platziert werden.</text>
        <text x="330" y="227">Hinweis:</text>
        <text x="330" y="231.500">Kabel nicht durch die Dichtung führen,</text>
        <text x="330" y="236.500">wie im Architektendetail</text>
        <text x="330" y="241.500">(BFEG-Y-S2-SD-FG.000-Ax00-) dargestellt</text>
        <text x="330" y="246">Verlegung oberhalb der Dichtung!</text>
      </g>
      <g fill="#f03a3a" fontSize="4">
        <text x="319" y="355">Allgemeine Hinweise:</text>
        <text x="319" y="359.500">Alle Maße sind unverbindliche Angaben und können Bautoleranzen</text>
        <text x="319" y="364">unterliegen. Die Maße beziehen sich auf Rohbau/Trockenbau, die</text>
        <text x="319" y="368">Höhenmaße sind ab OKFF angegeben.</text>
        <text x="319" y="372.500">Technisch konstruktive Änderungen bleiben vorbehalten.</text>
      </g>

      {/* title block */}
      <path d="M313.500 346.500H705.500V410.500H313.500zM517.500 346.500v64M611.500 346.500v64M517.500 363.500H705M517.500 380.500H705M517.500 400.500h94" stroke="#555" strokeWidth="0.700" />
      <path d="M517 383.500h94M517 387h94M517 390.500h94M517 394h94M517 397h94M526.500 380.500v20M536.500 380.500v20M593.500 380.500v30M536.500 400.500v10M555.500 400.500v10M573.500 400.500v10M517 403.500h94" stroke="#666" strokeWidth="0.500" />
      <path d="M611 346.500h5.500v33.500H611z" fill="#0c0c18" />
      <g fill="#444" fontSize="3">
        <text x="519" y="351">PROJEKT</text>
        <text x="519" y="358.500">20 Eigentumswohnungen mit Tiefgarage</text>
        <text x="519" y="367.500">PLANINHALT</text>
        <text x="519" y="372.500" fontWeight="bold" fill="#222">GRUNDRISS WHG. 4.6</text>
        <text x="618" y="351">SIEDLUNGSBAUGESELLSCHAFT</text>
        <text x="618" y="357">Humboldtstr. Weg 10 D - 20357 Hamburg</text>
        <text x="618" y="360">Tel. 040 - 347 89 - 0</text>
        <text x="618" y="368">ARCHITEKTEN</text>
        <text x="618" y="374">Musterstr. 25 a - 20357 Hamburg</text>
        <text x="618" y="377">Tel. 040 - 77 77 20 - 10</text>
        <text x="614" y="384.500">PLAN ZUR AUSFÜHRUNG FREIGEGEBEN:</text>
        <text x="614" y="409">Datum, Unterschrift</text>
        <text x="518" y="403">FORMAT</text>
        <text x="537" y="403">MASSSTAB</text>
        <text x="556" y="403">GEZ.</text>
        <text x="575" y="403">INDEX</text>
        <text x="594" y="403">DATUM</text>
        <text x="519" y="408">A3</text>
        <text x="538" y="408">1:50</text>
        <text x="557" y="408">cm</text>
        <text x="575" y="408">-</text>
        <text x="595" y="408">12.06.2020</text>
      </g>
      <text x="614" y="402" fontSize="17" fontWeight="900" fontFamily="Lato, sans-serif" fill="#0ca67c" stroke="#0ca67c" strokeWidth="1.300">GRAFEX</text>
      <text x="683" y="391" fontSize="4" fill="#0ca67c">®</text>
    </svg>
  );
}

function DocumentArea() {
  return (
    <main className="flex min-w-0 flex-1 flex-col">
      <div className="flex h-[13px] shrink-0 items-center justify-between pr-[2px]">
        <div className="flex h-full items-center">
          <span className="px-px"><TabArrow dir="left" /></span>
          <svg viewBox="0 0 10 11" className="mt-[2px] h-[11px] w-[10px]" aria-hidden>
            <path d="M0 11L8 1h2v10z" fill="#fff" />
          </svg>
          <button className="mt-[2px] flex h-[11px] items-center gap-[5px] bg-white pr-[3px] pl-[7px] font-semibold whitespace-nowrap text-[#333]">
            GRUNDRISS WHG. 4.6 - Elektro
            <Close />
          </button>
        </div>
        <TabArrow dir="right" />
      </div>
      <div className="flex min-h-0 flex-1 flex-col bg-[#d9d9d9] pt-px pr-px pb-px pl-[2px]">
        <div className="flex min-h-0 flex-1 border-t border-l border-[#6b6b6b]">
          <div className="min-h-0 min-w-0 flex-1 overflow-hidden bg-[#8f98ae]">
            <FloorPlan />
          </div>
          <div className="flex w-[9px] flex-col bg-[#cdcdcd]">
            <button aria-label="Nach oben" className="grid h-[9px] place-items-center bg-[#f1f1f1]"><Arrow dir="up" /></button>
            <span className="flex-1" />
            <button aria-label="Nach unten" className="grid h-[9px] place-items-center bg-[#f1f1f1]"><Arrow dir="down" /></button>
          </div>
        </div>
      </div>
    </main>
  );
}

/* ---------- markup settings ---------- */

function Field({ id, label, indent }: { id: string; label: string; indent?: boolean }) {
  return (
    <div className="flex flex-col gap-px pb-px">
      <label htmlFor={id} className={clsx("leading-[12px]", indent && "pl-px")}>{label}</label>
      <input id={id} className="h-[12px] w-[72px] border border-[#d9d9d9] bg-white px-[2px]" />
    </div>
  );
}

const SIDE_TABS = [
  {
    label: "Eigenschaften",
    height: "h-[52px]",
    icon: <Icon w={8} h={8}><path d="M.5.500h7v7h-7z" fill="#e9f5ff" stroke="#5ab0f5" /><path d="M0 0h8v3H0z" fill={BLUE} /></Icon>,
  },
  {
    label: "Ordner",
    height: "h-[30px]",
    icon: <Icon w={9} h={8}><path d="M0 1h4l1 1h4v2H0z" fill="#a57a2a" /><path d="M0 3h9v4.500H0z" fill="#edb257" /></Icon>,
  },
  {
    label: "Markup-Symbole",
    height: "h-[60px]",
    icon: (
      <Icon w={9} h={9}>
        <path d="M.5.500h3.600v3.600H.500z" fill="#e86a4a" /><path d="M4.900.500h3.600v3.600H4.900z" fill="#4a7ed0" />
        <path d="M.5 4.900h3.600v3.600H.500z" fill="#e86a4a" /><path d="M4.900 4.900h3.600v3.600H4.900z" fill="#5cb85c" />
        <path d="M1.600 2.300h1.400M6 2.300h1.400M1.600 6.700h1.400M6 6.700h1.400" stroke="#fff" strokeWidth="0.700" />
      </Icon>
    ),
  },
];

function MarkupPanel() {
  return (
    <aside className="flex w-[99px] shrink-0 flex-col bg-[#f1f1f1]">
      <PanelHeader title="Markup-Einstellungen" />
      <form className="flex flex-col items-start pl-[5px] font-[Roboto,sans-serif] text-[#555]">
        <p className="leading-[10px] whitespace-nowrap">Eingabewerte für neue Elemente:</p>
        <Field id="name" label="Name:" />
        <Field id="kategorie" label="Kategorie:" indent />
        <Field id="eintrag" label="Anwenderdefinierter Eintrag:" indent />
        <label htmlFor="hoehe" className="leading-[12px]">Höhe:</label>
        <div className="flex items-center gap-[5px] pt-px">
          <input id="hoehe" className="h-[12px] w-[27px] border border-[#d9d9d9] bg-white px-[2px]" />
          m
        </div>
        <label className="flex items-center gap-[2px] pt-[8px] leading-[6px]"><Check id="volumen" checked /> Volumen einschließen</label>
        <label className="flex items-center gap-[2px] pt-[8px] leading-[6px]"><Check id="umfang" /> Umfang einschließen</label>
      </form>
    </aside>
  );
}

function SideTabs() {
  return (
    <nav className="flex w-[17px] shrink-0 flex-col gap-[10px] pt-[4px] font-[Roboto,sans-serif] text-[7px]">
      {SIDE_TABS.map((t) => (
        <button key={t.label} className={clsx("flex border-r-[3px] border-[#d0d0d0] pl-[2px]", t.height)}>
          <span className="flex flex-col items-center gap-[2px] text-[#444]">
            {t.icon}
            <span className="whitespace-nowrap [writing-mode:vertical-rl]">{t.label}</span>
          </span>
        </button>
      ))}
    </nav>
  );
}

/* ---------- comment list ---------- */

const User = (
  <Icon w={9} h={9}>
    <circle cx="4.500" cy="2.600" r="2.100" fill={BLUE} />
    <path d="M3.500 4.500h2v1.200l3 1V8.600H.5V6.700l3-1z" fill={BLUE} />
  </Icon>
);

function CommentList() {
  return (
    <section className="flex shrink-0 flex-col">
      <div className="mr-[15px]"><PanelHeader title="Kommentarliste" /></div>
      <div className="mr-[17px] flex h-[14px] items-center gap-[3px] bg-[#f1f1f1] pl-[2px]">
        <button aria-label="Weiter"><Icon w={9} h={9}><path d="M.5.500l6 4-6 4zM6.600.500h2v8h-2z" fill="#6db9f5" /></Icon></button>
        <button aria-label="Löschen"><Icon w={9} h={9}><path d="M1.500 1.500l6 6M7.500 1.500l-6 6" stroke="#e27a66" strokeWidth="1.800" /></Icon></button>
        <button aria-label="Exportieren">
          <Icon w={10} h={10}>
            <path d="M.6.6h7v6h-7zM.6 2.600h7M.6 4.600h7M3 .6v6M5.300.6v6" stroke="#8a8a8a" strokeWidth="0.600" />
            <path d="M4 4h5.500v5.500H4z" fill="#fff" stroke="#3f8f5f" strokeWidth="0.800" />
            <path d="M5.400 5.400l2.800 2.800M8.200 5.400L5.400 8.200" stroke="#3f8f5f" strokeWidth="0.700" />
          </Icon>
        </button>
        <button aria-label="Summe" className="pl-[3px]"><Icon w={9} h={9}><path d="M7.500 2.400V1H1.400l3.400 3.500L1.400 8h6.100V6.600" stroke={BLUE} strokeWidth="1.200" /></Icon></button>
        <button aria-label="Formular">
          <Icon w={9} h={9}><path d="M.8.8h7.400v7.400H.800z" fill="#eaf4fd" stroke="#3672a8" strokeWidth="0.900" /><path d="M2 3h2.400M5.400 3H7M2 5h2.400M5.400 5H7M2 6.800h5" stroke="#5a8fc0" strokeWidth="0.800" /></Icon>
        </button>
        <button aria-label="Notiz"><Icon w={10} h={9}><path d="M.5 1h9v5.200H5L3 8.200v-2H.500z" fill="#fac64b" /><path d="M2 3h6M2 4.500h4" stroke="#b58b28" strokeWidth="0.600" /></Icon></button>
        <span className="h-[10px] border-l border-[#d4d4d4]" />
        <button aria-label="Nach Ebene"><LayersSmall color="#e04a3c" /></button>
        <button aria-label="Nach Benutzer">{User}</button>
      </div>
      <div className="mr-[17px] h-[82px] border-t border-r border-b border-[#d6d6d6] bg-[#fdfdfd]">
        <table className="table-fixed border-collapse text-left text-[#444]">
          <thead>
            <tr className="h-[10px] bg-[#f0f0f0] leading-[8px]">
              <th className="w-[11px] border-b border-[#b0b0b0] p-0" />
              {COLUMNS.map((c) => (
                <th
                  key={c.label}
                  className={clsx("border-r border-b border-[#c4c4c4] p-0 pl-[2px] font-normal whitespace-nowrap", c.width, c.label === "Zeit" && "bg-[#cfcfcf]")}
                >
                  {c.label}
                </th>
              ))}
            </tr>
          </thead>
          <tbody className="font-[Roboto,sans-serif] leading-[8px] whitespace-nowrap">
            {MEASUREMENTS.map(([length, area, content], i) => (
              <tr key={i} className="h-[9px]">
                <td className="border-b border-[#d8d8d8] bg-[#f4f4f4] p-0" />
                {["MRuetz", "Flächenmessung", "Markup Layer 4", "08.09.2021", length, area, "", content, "", "", ""].map((cell, j) => (
                  <td key={j} className="border-r border-b border-[#d4d4d4] p-0 pl-px">{cell}</td>
                ))}
              </tr>
            ))}
          </tbody>
        </table>
      </div>
      <div className="flex h-[13px] items-center text-[#444]">
        <button className="flex h-[12px] items-center gap-px px-[2px]">
          <Icon w={8} h={9}><path d="M0 1h3l1 1h3v5H0z" fill="#e0a04a" /><circle cx="5" cy="5.600" r="1.700" fill="#f1f1f1" stroke="#777" strokeWidth="0.700" /><path d="M6.200 6.800l1.400 1.600" stroke="#777" strokeWidth="0.800" /></Icon>
          Datei-Explorer
        </button>
        <button className="flex h-[12px] items-center gap-px border border-t-0 border-[#bbb] bg-white px-px">
          <Icon w={8} h={8}><path d="M0 0h8v8H0z" fill={BLUE} /><path d="M1 3h6M1 4.700h6M1 6.400h6" stroke="#d6ebff" strokeWidth="0.700" /></Icon>
          Kommentarliste
        </button>
      </div>
    </section>
  );
}

/* ---------- status bar ---------- */

function StatusBar() {
  return (
    <footer className="flex h-[14px] shrink-0 items-center border-t border-b-2 border-t-[#cfcfcf] border-b-[#25405f] bg-[#f0f0f0] pr-[2px] pl-[5px] whitespace-nowrap text-[#555]">
      <span className="w-[48px]">X: 1.12</span>
      <span className="flex-1">Y: 0.07</span>
      <Combo label="Einheit" value="Meter" className="h-[11px] w-[40px]" />
      <button aria-label="Maßstab einstellen" className="flex items-center gap-[3px] pl-[2px]">
        <Icon w={9} h={9}><path d="M.5 1v7.500h7.500z" fill="#dfa24a" /><circle cx="6" cy="3" r="1.800" stroke="#555" strokeWidth="0.900" /></Icon>
        <Caret />
      </button>
      <button aria-label="Kalibrieren" className="pr-[3px] pl-[5px]">
        <Icon w={9} h={9}><path d="M.5.500h3v8h-3z" fill="#b9782a" /><path d="M6.500.800v7.400M5 2.500L6.500.800 8 2.500M5 6.500l1.500 1.700L8 6.500" stroke={BLUE} /></Icon>
      </button>
      <Combo label="Maßstab" value="1:1" className="h-[11px] w-[40px]" />
      <Icon w={8} h={9} className="ml-[6px]"><path d="M.6.500h4.200l2.600 2.600v5.400H.600z" fill="#fff" stroke="#3d9be9" strokeWidth="0.800" /></Icon>
      <span className="w-[38px] pl-[3px]">Unbekannt</span>
      <button className="flex w-[23px] items-center justify-between">1% <Caret /></button>
      <button aria-label="Verkleinern" className="ml-[5px] w-[8px]">−</button>
      <input
        type="range"
        aria-label="Zoom"
        defaultValue={25}
        className="mx-[3px] h-[9px] w-[46px] appearance-none bg-transparent [&::-webkit-slider-runnable-track]:h-px [&::-webkit-slider-runnable-track]:bg-[#b5b5b5] [&::-webkit-slider-thumb]:-mt-[3px] [&::-webkit-slider-thumb]:h-[7px] [&::-webkit-slider-thumb]:w-[3px] [&::-webkit-slider-thumb]:appearance-none [&::-webkit-slider-thumb]:bg-[#b5b5b5]"
      />
      <button aria-label="Vergrößern" className="mr-[2px] w-[8px]">+</button>
      <button aria-label="Ortho" className="flex h-[11px] w-[17px] items-center justify-between bg-[#c6c6c6] px-px">
        <Icon w={9} h={9}><path d="M1.500 1v6h6M.5 5.800l1 1.500 1 0M5.800 1v4M4.500 2.200L5.800.800 7.200 2.200" stroke={BLUE} strokeWidth="0.900" /></Icon>
        <Caret />
      </button>
      <button aria-label="Fang" className="mx-[3px]">
        <Icon w={8} h={9}><path d="M.8.8v7.400h7M7.500 1L2.500 6M2.500 3.500V6H5" stroke="#3d9be9" strokeWidth="0.900" /></Icon>
      </button>
      <button className="flex items-center gap-[2px] pl-[5px]">
        {User} MRuetz <Caret />
      </button>
    </footer>
  );
}

export default function App() {
  return (
    <div className="flex h-screen flex-col overflow-hidden bg-[#e6e6e6] font-['Open_Sans','Noto_Sans',sans-serif] text-[6px] leading-[9px]">
      <div className="shrink-0 bg-[#2b579a]">
        <TitleBar />
        <RibbonTabs />
      </div>
      <Ribbon />
      <div className="flex min-h-0 flex-1">
        <LayerPanel />
        <span className="w-[3px] shrink-0" />
        <DocumentArea />
        <span className="w-[4px] shrink-0" />
        <MarkupPanel />
        <SideTabs />
      </div>
      <div className="h-[5px] shrink-0 bg-[#cdcdcd]" />
      <CommentList />
      <StatusBar />
    </div>
  );
}
